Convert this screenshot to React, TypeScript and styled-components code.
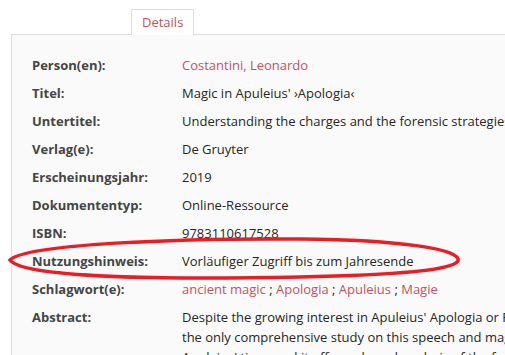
import React from "react";
import styled, { createGlobalStyle } from "styled-components";

const Global = createGlobalStyle`
  html, body { margin: 0; padding: 0; background: #ffffff; overflow: hidden; }
  body { font-family: "Open Sans", "DejaVu Sans", sans-serif; font-size: 13px; color: #333; }
`;

const Page = styled.div`
  position: relative;
  padding: 9px 0 0 11px;
  width: 800px;
`;

const TabBar = styled.div`
  display: flex;
  padding-left: 120px;
`;

const Tab = styled.div`
  position: relative;
  z-index: 1;
  margin-bottom: -1px;
  height: 25px;
  padding: 0 10px;
  line-height: 24px;
  background: #ffffff;
  border: 1px solid #dddddd;
  border-bottom: none;
  color: #c4525e;
  font-size: 13px;
`;

const Panel = styled.div`
  border: 1px solid #dddddd;
  background: #fafafa;
  padding: 16px 20px 20px 20px;
`;

const Row = styled.div`
  display: grid;
  grid-template-columns: 150px 464px;
  padding: 4px 0 4px 0;
  line-height: 20px;
`;

const Label = styled.div`
  font-weight: 700;
  color: #454545;
`;

const Value = styled.div<{ $nowrap?: boolean }>`
  color: #262626;
  white-space: ${(p) => (p.$nowrap ? "nowrap" : "normal")};
`;

const Link = styled.a`
  color: #c4525e;
  text-decoration: none;
`;

const Sep = styled.span`
  color: #262626;
`;

const Marker = styled.svg`
  position: absolute;
  left: 0;
  top: 0;
  pointer-events: none;
`;

const keywords = ["ancient magic", "Apologia", "Apuleius", "Magie"];

export default function App() {
  return (
    <>
      <Global />
      <Page>
        <TabBar>
          <Tab>Details</Tab>
        </TabBar>
        <Panel>
          <Row>
            <Label>Person(en):</Label>
            <Value>
              <Link>Costantini, Leonardo</Link>
            </Value>
          </Row>
          <Row>
            <Label>Titel:</Label>
            <Value>Magic in Apuleius' ›Apologia‹</Value>
          </Row>
          <Row>
            <Label>Untertitel:</Label>
            <Value $nowrap>Understanding the charges and the forensic strategies in Apuleius' speech</Value>
          </Row>
          <Row>
            <Label>Verlag(e):</Label>
            <Value>De Gruyter</Value>
          </Row>
          <Row>
            <Label>Erscheinungsjahr:</Label>
            <Value>2019</Value>
          </Row>
          <Row>
            <Label>Dokumententyp:</Label>
            <Value>Online-Ressource</Value>
          </Row>
          <Row>
            <Label>ISBN:</Label>
            <Value>9783110617528</Value>
          </Row>
          <Row>
            <Label>Nutzungshinweis:</Label>
            <Value>Vorläufiger Zugriff bis zum Jahresende</Value>
          </Row>
          <Row>
            <Label>Schlagwort(e):</Label>
            <Value>
              {keywords.map((k, i) => (
                <React.Fragment key={k}>
                  {i > 0 && <Sep> ; </Sep>}
                  <Link>{k}</Link>
                </React.Fragment>
              ))}
            </Value>
          </Row>
          <Row>
            <Label>Abstract:</Label>
            <Value>
              Despite the growing interest in Apuleius' Apologia or Pro se de magia, this is
              the only comprehensive study on this speech and magic as a legal charge in
              Apuleius' time, and it offers a broad analysis of the forensic strategies.
            </Value>
          </Row>
        </Panel>
        <Marker width="505" height="355" viewBox="0 0 505 355">
          <path
            d="M10,260 C 26,244 180,238 300,239 C 400,240 462,249 458,261 C 452,270 400,275 300,277 C 200,279 24,280 10,260 Z"
            fill="none"
            stroke="#ec1c24"
            strokeWidth="3.5"
          />
        </Marker>
      </Page>
    </>
  );
}
